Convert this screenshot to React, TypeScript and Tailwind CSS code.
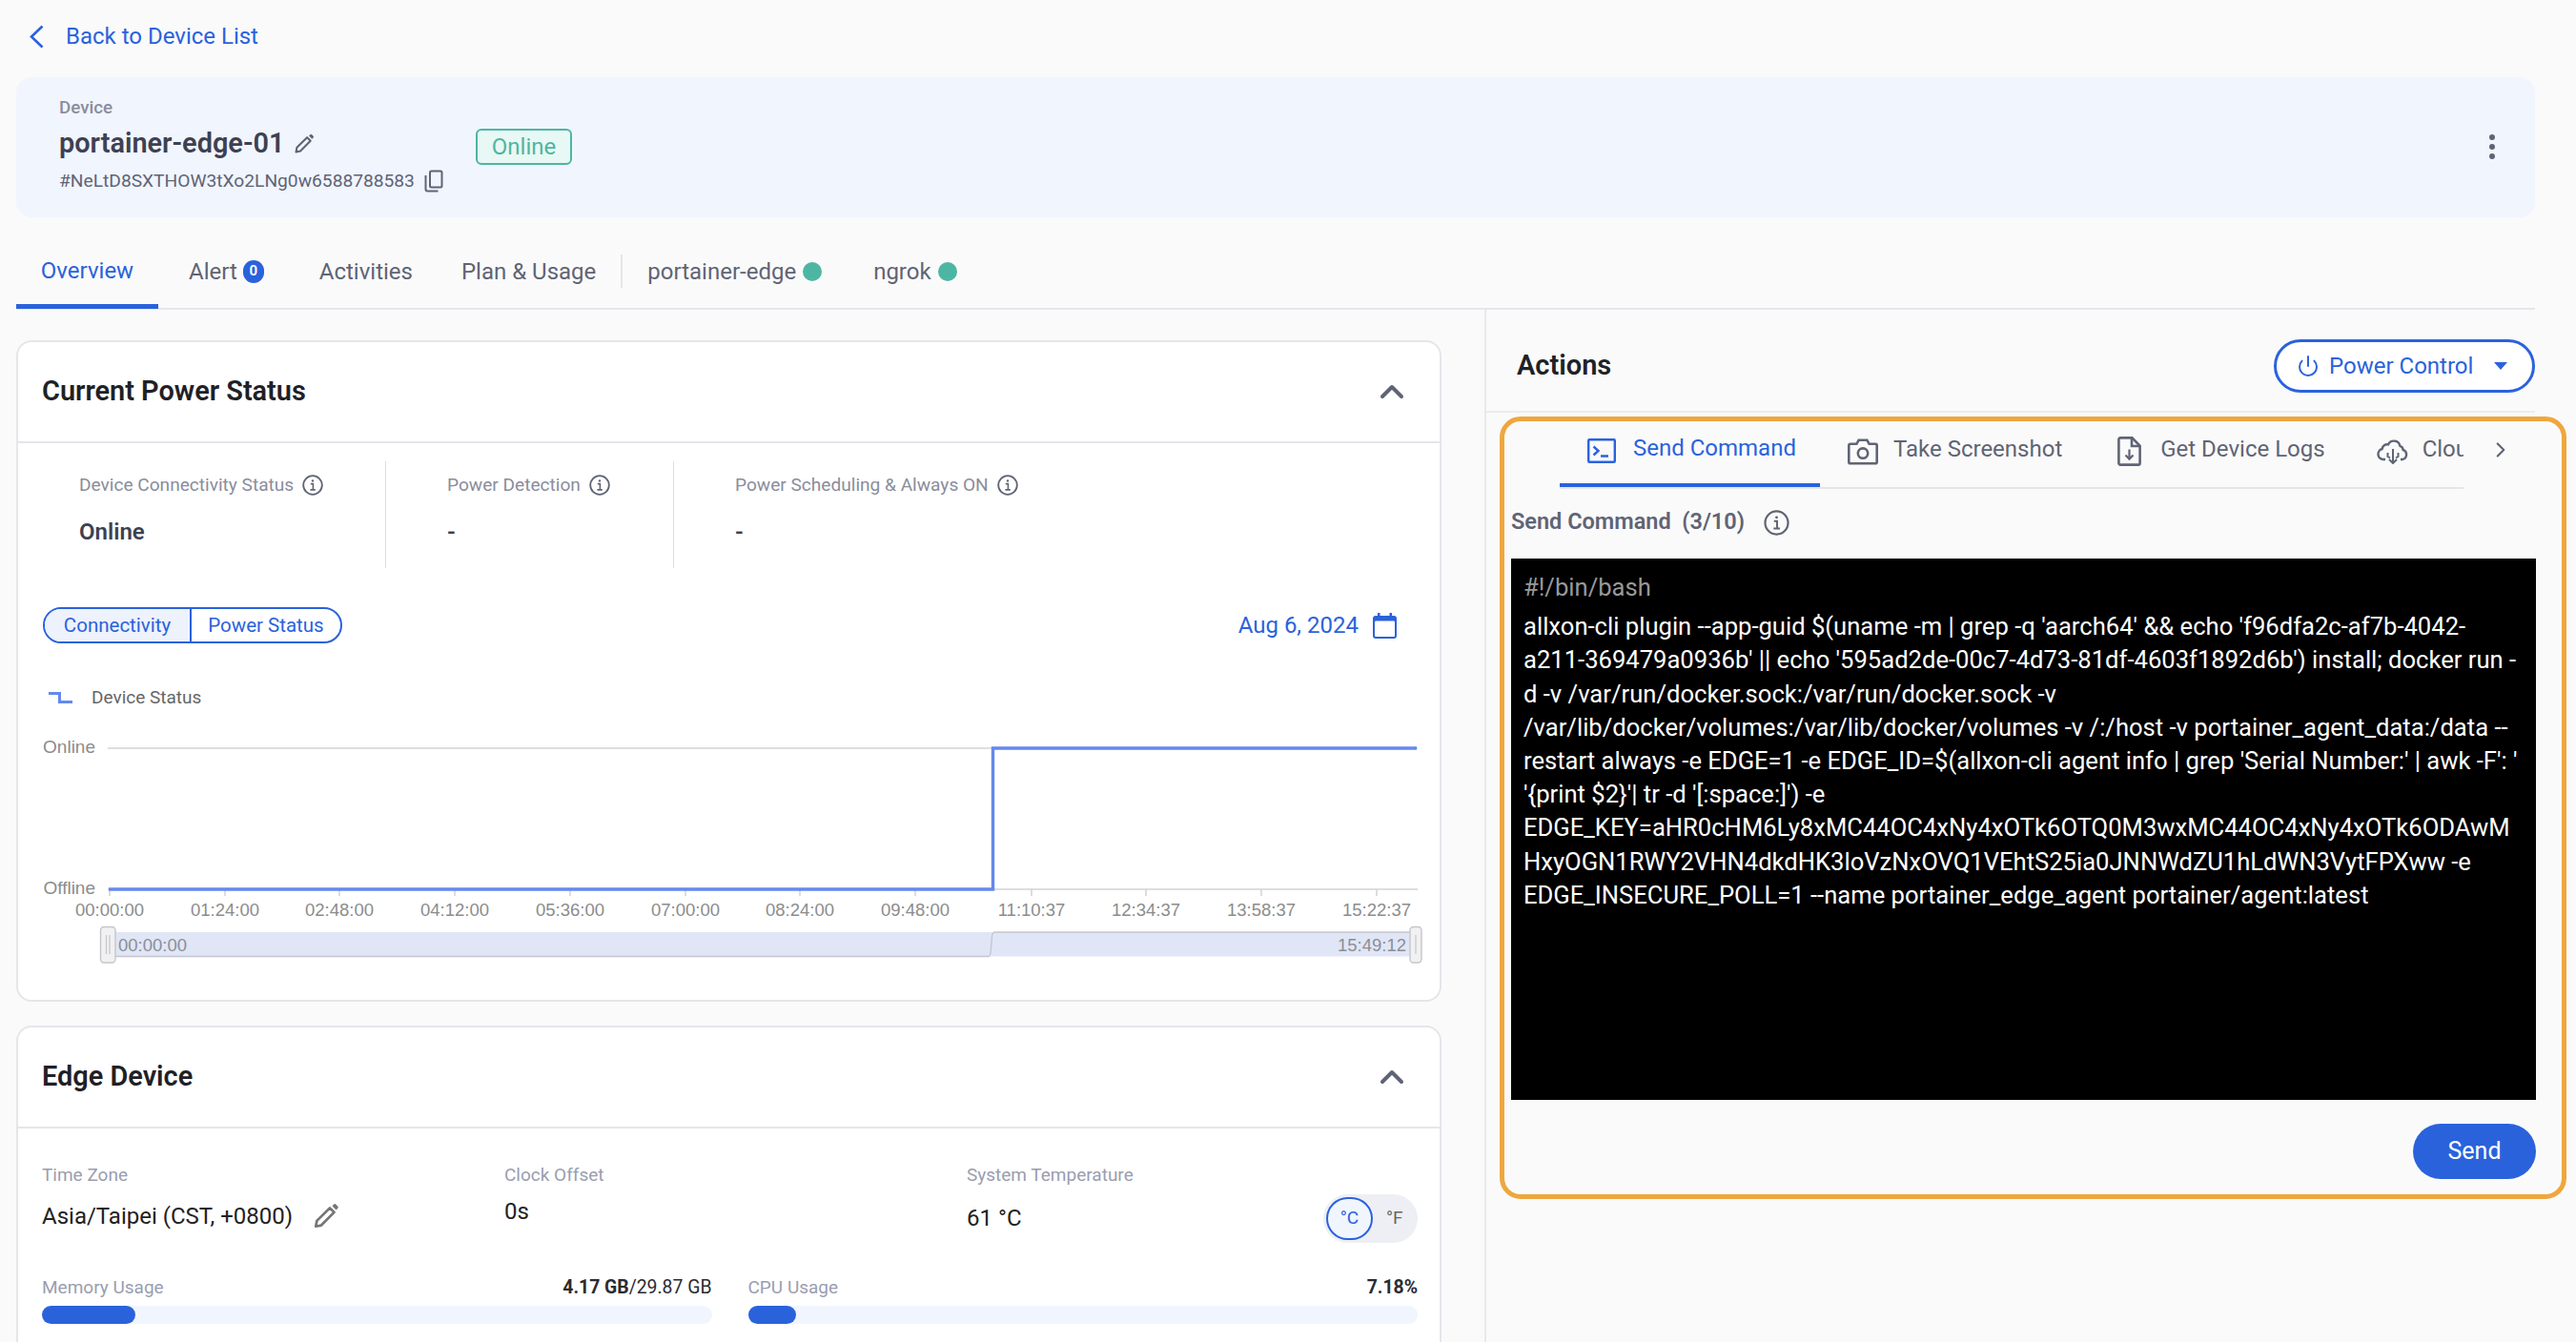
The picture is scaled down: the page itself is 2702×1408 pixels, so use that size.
import { ChevronRight, ChevronUp, Power } from "lucide-react";

const CHART_TICKS = [
  [114, "00:00:00"],
  [235, "01:24:00"],
  [355, "02:48:00"],
  [476, "04:12:00"],
  [597, "05:36:00"],
  [718, "07:00:00"],
  [838, "08:24:00"],
  [959, "09:48:00"],
  [1081, "11:10:37"],
  [1201, "12:34:37"],
  [1322, "13:58:37"],
  [1443, "15:22:37"],
] as const;

const COMMAND_LINES = [
  "allxon-cli plugin --app-guid $(uname -m | grep -q 'aarch64' && echo 'f96dfa2c-af7b-4042-",
  "a211-369479a0936b' || echo '595ad2de-00c7-4d73-81df-4603f1892d6b') install; docker run -",
  "d -v /var/run/docker.sock:/var/run/docker.sock -v",
  "/var/lib/docker/volumes:/var/lib/docker/volumes -v /:/host -v portainer_agent_data:/data --",
  "restart always -e EDGE=1 -e EDGE_ID=$(allxon-cli agent info | grep 'Serial Number:' | awk -F': '",
  "'{print $2}'| tr -d '[:space:]') -e",
  "EDGE_KEY=aHR0cHM6Ly8xMC44OC4xNy4xOTk6OTQ0M3wxMC44OC4xNy4xOTk6ODAwM",
  "HxyOGN1RWY2VHN4dkdHK3loVzNxOVQ1VEhtS25ia0JNNWdZU1hLdWN3VytFPXww -e",
  "EDGE_INSECURE_POLL=1 --name portainer_edge_agent portainer/agent:latest",
];

function InfoIcon({ size = 22 }: { size?: number }) {
  return (
    <svg width={size} height={size} viewBox="0 0 22 22" fill="none" stroke="#5f6475" className="shrink-0">
      <circle cx="11" cy="11" r="9.8" strokeWidth="1.8" />
      <path d="M8.8 9.6h2.6v6.2M8.4 15.9h5.4" strokeWidth="1.6" />
      <circle cx="11" cy="6.4" r="1.2" fill="#5f6475" stroke="none" />
    </svg>
  );
}

function PencilIcon({ size, color }: { size: number; color: string }) {
  return (
    <svg width={size} height={size} viewBox="0 0 24 24" fill="none" stroke={color} strokeWidth="2.3" className="shrink-0">
      <path d="M2.8 21.2l.9-5L15.4 4.6l3.9 3.9L7.7 20.2z" strokeLinejoin="round" />
      <path d="M17.5 2.7l1.4-1.3a1.4 1.4 0 0 1 2 0l1.6 1.6a1.4 1.4 0 0 1 0 2l-1.4 1.4z" fill={color} stroke="none" />
    </svg>
  );
}

function CopyIcon() {
  return (
    <svg width="20" height="24" viewBox="0 0 20 24" fill="none" stroke="#5f6475" strokeWidth="2" className="shrink-0">
      <rect x="6" y="1.5" width="12.5" height="17" rx="1.5" />
      <path d="M1.5 6v14.5a2 2 0 0 0 2 2h11" />
    </svg>
  );
}

function BackIcon() {
  return (
    <svg width="15" height="25" viewBox="0 0 15 25" fill="none" stroke="#2a62dc" strokeWidth="2.6" className="shrink-0">
      <path d="M13.5 1.5L2 12.5l11.5 11" />
    </svg>
  );
}

function CalendarIcon() {
  return (
    <svg width="25" height="27" viewBox="0 0 25 27" className="shrink-0">
      <path d="M5 0h2.5v3h10V0H20v3h2a3 3 0 0 1 3 3v18a3 3 0 0 1-3 3H3a3 3 0 0 1-3-3V6a3 3 0 0 1 3-3h2z" fill="#2a62dc" />
      <rect x="2" y="8.5" width="21" height="16.5" rx="1" fill="#ffffff" />
    </svg>
  );
}

function LegendIcon() {
  return (
    <svg width="25" height="12" viewBox="0 0 25 12" fill="none" stroke="#6489ee" strokeWidth="3" className="shrink-0">
      <path d="M0 1.5h11.5v9H25" />
    </svg>
  );
}

function TerminalIcon() {
  return (
    <svg width="30" height="26" viewBox="0 0 30 26" fill="none" stroke="#2a62dc" strokeWidth="2.4" className="mt-[6px] shrink-0">
      <rect x="1.2" y="1.2" width="27.6" height="23.6" rx="1" />
      <path d="M6.5 8.5l5 4.5-5 4.5M14 18.5h8" />
    </svg>
  );
}

function CameraIcon() {
  return (
    <svg width="32" height="28" viewBox="0 0 32 28" fill="none" stroke="#5f6475" strokeWidth="2.6" className="mt-[6px] shrink-0">
      <path d="M2.8 5.8h6.6l2.2-4h8.8l2.2 4h6.6a1.5 1.5 0 0 1 1.5 1.5v17.4a1.5 1.5 0 0 1-1.5 1.5H2.8a1.5 1.5 0 0 1-1.5-1.5V7.3a1.5 1.5 0 0 1 1.5-1.5z" />
      <circle cx="16" cy="15.6" r="5.2" />
    </svg>
  );
}

function FileDownIcon() {
  return (
    <svg width="25" height="31" viewBox="0 0 25 31" fill="none" stroke="#5f6475" strokeWidth="2.6" className="mt-[6px] shrink-0">
      <path d="M3 1.4h12.4l8.2 8.4v18.2a1.6 1.6 0 0 1-1.6 1.6H3a1.6 1.6 0 0 1-1.6-1.6V3A1.6 1.6 0 0 1 3 1.4z" />
      <path d="M15 1.4v8.6h8.6" />
      <path d="M12.5 13.5v10M8.5 19.5l4 4.2 4-4.2" strokeWidth="2.2" />
    </svg>
  );
}

function CloudIcon() {
  return (
    <svg width="34" height="27" viewBox="0 0 34 27" fill="none" stroke="#5f6475" strokeWidth="2.4" className="mt-[6px] shrink-0">
      <path d="M9 22H7a5.6 5.6 0 0 1-1.4-11A5.4 5.4 0 0 1 12 6.4a6.6 6.6 0 0 1 12.4 1.4A4.6 4.6 0 0 1 27.6 12 5.2 5.2 0 0 1 27 22h-2" />
      <path d="M17 11v15M13 22l4 4 4-4M11.5 15v4l2.5 1.5M22.5 15v4L20 20.5" strokeWidth="2" />
    </svg>
  );
}

function CardHeader({ title }: { title: string }) {
  return (
    <div className="flex h-[106px] shrink-0 items-center justify-between border-b-2 border-[#e5e6ea] pl-[25px] pr-[30px]">
      <h2 className="text-[28.9px] font-semibold text-[#1f2126]">{title}</h2>
      <ChevronUp size={40} strokeWidth={2.4} className="text-[#5f6475]" />
    </div>
  );
}

function StatColumn({ label, value, width }: { label: string; value: string; width: string }) {
  return (
    <div className={`${width} pt-[14px] pl-[64px]`}>
      <div className="flex h-[22px] items-center gap-[9px]">
        <span className="text-[19.1px] text-[#8a8d9c]">{label}</span>
        <InfoIcon />
      </div>
      <div className="mt-[24px] h-[28px] text-[24px] leading-[28px] font-semibold text-[#3d4152]">{value}</div>
    </div>
  );
}

function Chart() {
  return (
    <svg width="1493" height="260" viewBox="18 760 1493 260" className="mt-[16px] block">
      <g fontFamily="'Liberation Sans', sans-serif" fontSize="19" fill="#8c8c8c">
        <text x="99" y="790" textAnchor="end">Online</text>
        <text x="99" y="938" textAnchor="end">Offline</text>
        {CHART_TICKS.map(([x, t]) => (
          <text key={t} x={x} y="961" textAnchor="middle" fontSize="18.5">{t}</text>
        ))}
      </g>
      <path d="M112 785H1486M112 933H1486" stroke="#d4d4d4" strokeWidth="1.6" fill="none" />
      {CHART_TICKS.map(([x, t]) => (
        <path key={t} d={`M${x} 933v7`} stroke="#cfcfcf" strokeWidth="1.4" />
      ))}
      <path d="M113 933H1040.5V785H1485" stroke="#6489ee" strokeWidth="3.4" fill="none" />
      {/* slider */}
      <rect x="120" y="978" width="1360" height="25.5" fill="#e0e6f5" />
      <path d="M120 1003.5H1036Q1038 1003 1038.5 995L1039.5 982Q1040 978 1043 978H1479" stroke="#c3c7d1" strokeWidth="1.4" fill="none" />
      <rect x="104.5" y="972.5" width="15.5" height="37.5" rx="3.5" fill="#f1f1f3" stroke="#c6c6ca" strokeWidth="1.4" />
      <path d="M110.5 981v20M114 981v20" stroke="#c6c6ca" strokeWidth="1.2" />
      <rect x="1478" y="972.5" width="12" height="37.5" rx="3.5" fill="#f1f1f3" stroke="#c6c6ca" strokeWidth="1.4" />
      <path d="M1484 981v20" stroke="#c6c6ca" strokeWidth="1.2" />
      <g fontFamily="'Liberation Sans', sans-serif" fontSize="18.5" fill="#8b8e98">
        <text x="123" y="998">00:00:00</text>
        <text x="1474" y="998" textAnchor="end">15:49:12</text>
      </g>
    </svg>
  );
}

function Usage({ label, value, fill }: { label: string; value: React.ReactNode; fill: string }) {
  return (
    <div>
      <div className="flex h-[22px] items-center justify-between">
        <span className="text-[19px] text-[#9a9db0]">{label}</span>
        <span className="text-[19.4px] text-[#2a2c33]">{value}</span>
      </div>
      <div className="mt-[8px] h-[19px] rounded-full bg-[#f1f5fe]">
        <div className={`h-full rounded-full bg-[#2a62dc] ${fill}`} />
      </div>
    </div>
  );
}

function PageTab({ label, active, className = "", children }: { label: string; active?: boolean; className?: string; children?: React.ReactNode }) {
  return (
    <div className={`flex h-full items-center gap-[6px] text-[24px] ${active ? "text-[#2a62dc]" : "pt-[18px] text-[#5f6475]"} ${className}`}>
      {label}
      {children}
    </div>
  );
}

export default function App() {
  return (
    <div className="flex h-[1408px] w-[2702px] flex-col overflow-hidden bg-[#fafafa] font-['Roboto',sans-serif]">
      {/* back link */}
      <div className="mb-[5px] flex h-[76px] items-center pl-[31px] text-[24px] text-[#2a62dc]">
        <BackIcon />
        <span className="ml-[23px]">Back to Device List</span>
      </div>

      {/* device header */}
      <div className="ml-[17px] mr-[43px] flex h-[147px] shrink-0 rounded-2xl bg-[#f1f5fe] pl-[45px] pr-[42px]">
        <div className="w-[437px] pt-[21px]">
          <div className="h-[22px] text-[18.8px] leading-[22px] font-medium text-[#8a8d9c]">Device</div>
          <div className="mt-[9px] flex h-[36px] items-center gap-[9px]">
            <span className="text-[28.9px] font-semibold text-[#3d4152]">portainer-edge-01</span>
            <PencilIcon size={22} color="#5f6475" />
          </div>
          <div className="mt-[9px] flex h-[24px] items-center gap-[10px]">
            <span className="text-[19.2px] text-[#5f6475]">#NeLtD8SXTHOW3tXo2LNg0w6588788583</span>
            <CopyIcon />
          </div>
        </div>
        <div className="mt-[54px] flex h-[38px] w-[101px] items-center justify-center rounded-md border-2 border-[#4db6a2] bg-[#e8f8f5] text-[24px] text-[#4db6a2]">Online</div>
        <div className="ml-auto flex flex-col gap-[4px] pt-[60px]">
          <span className="size-[6px] rounded-full bg-[#5f6475]" />
          <span className="size-[6px] rounded-full bg-[#5f6475]" />
          <span className="size-[6px] rounded-full bg-[#5f6475]" />
        </div>
      </div>

      {/* page tabs */}
      <div className="ml-[17px] mr-[43px] flex h-[97px] shrink-0 items-center border-b-2 border-[#e5e6ee]">
        <PageTab label="Overview" active className="-mb-[2px] w-[149px] justify-center border-b-[5px] border-[#2a62dc] pt-[20px]" />
        <PageTab label="Alert" className="ml-[32px]">
          <span className="flex h-[24px] w-[22px] items-center justify-center rounded-full bg-[#2a62dc] text-[15px] font-semibold text-white">0</span>
        </PageTab>
        <PageTab label="Activities" className="ml-[58px]" />
        <PageTab label="Plan & Usage" className="ml-[51px]" />
        <div className="ml-[26px] mt-[18px] h-[35px] w-[2px] bg-[#e5e6ea]" />
        <PageTab label="portainer-edge" className="ml-[26px] gap-[7px]">
          <span className="size-[20px] rounded-full bg-[#4db6a2]" />
        </PageTab>
        <PageTab label="ngrok" className="ml-[54px] gap-[7px]">
          <span className="size-[20px] rounded-full bg-[#4db6a2]" />
        </PageTab>
      </div>

      <div className="flex min-h-0 flex-1">
        {/* left column */}
        <div className="w-[1559px] shrink-0 border-r-2 border-[#e9e9ed] pl-[17px] pr-[45px] pt-[32px]">
          <div className="h-[694px] overflow-hidden rounded-2xl border-2 border-[#e5e6ea] bg-white">
            <CardHeader title="Current Power Status" />
            <div className="mt-[19px] flex h-[112px]">
              <StatColumn label="Device Connectivity Status" value="Online" width="w-[386px] border-r border-[#dcdde2]" />
              <StatColumn label="Power Detection" value="-" width="w-[302px] border-r border-[#dcdde2]" />
              <StatColumn label="Power Scheduling & Always ON" value="-" width="flex-1" />
            </div>
            <div className="mt-[41px] flex h-[38px] items-center justify-between pl-[26px] pr-[45px] text-[20.5px] text-[#2a62dc]">
              <div className="flex h-full overflow-hidden rounded-full border-2 border-[#2a62dc]">
                <div className="flex w-[154px] items-center justify-center border-r-2 border-[#2a62dc] bg-[#edf2fd]">Connectivity</div>
                <div className="flex w-[156px] items-center justify-center">Power Status</div>
              </div>
              <div className="flex items-center gap-[15px] text-[24px]">
                Aug 6, 2024
                <CalendarIcon />
              </div>
            </div>
            <div className="mt-[45px] flex h-[24px] items-center gap-[20px] pl-[32px]">
              <LegendIcon />
              <span className="text-[19px] text-[#666666]">Device Status</span>
            </div>
            <Chart />
          </div>

          <div className="mt-[25px] h-[400px] overflow-hidden rounded-t-2xl border-2 border-[#e5e6ea] bg-white">
            <CardHeader title="Edge Device" />
            <div className="ml-[25px] mt-[38px] grid h-[118px] w-[1443px] grid-cols-[485px_485px_473px]">
              <div>
                <div className="h-[22px] text-[19px] leading-[22px] text-[#9a9db0]">Time Zone</div>
                <div className="mt-[18px] flex h-[28px] items-center gap-[21px] text-[24px] text-[#222222]">
                  Asia/Taipei (CST, +0800)
                  <PencilIcon size={28} color="#757575" />
                </div>
              </div>
              <div>
                <div className="h-[22px] text-[19px] leading-[22px] text-[#9a9db0]">Clock Offset</div>
                <div className="mt-[13px] h-[28px] text-[24px] leading-[28px] text-[#222222]">0s</div>
              </div>
              <div className="flex justify-between">
                <div>
                  <div className="h-[22px] text-[19px] leading-[22px] text-[#9a9db0]">System Temperature</div>
                  <div className="mt-[20px] h-[28px] text-[24px] leading-[28px] text-[#222222]">61 °C</div>
                </div>
                <div className="mt-[31px] flex h-[51px] w-[99px] items-center rounded-full bg-[#eeeff4] pl-[3px] text-[19px]">
                  <span className="flex h-[45px] w-[49px] items-center justify-center rounded-full border-2 border-[#2a62dc] bg-[#f1f5fe] text-[#2a62dc]">°C</span>
                  <span className="ml-[14px] text-[#666666]">°F</span>
                </div>
              </div>
            </div>
            <div className="ml-[25px] grid w-[1443px] grid-cols-2 gap-[38px]">
              <Usage label="Memory Usage" fill="w-[14%]" value={<><b className="font-bold">4.17 GB</b>/29.87 GB</>} />
              <Usage label="CPU Usage" fill="w-[7.18%]" value={<b className="font-bold">7.18%</b>} />
            </div>
          </div>
        </div>

        {/* right column */}
        <div className="min-w-0 flex-1">
          <div className="mr-[43px] flex h-[108px] items-center justify-between border-b-2 border-[#ececef] pl-[32px] pt-[12px]">
            <h2 className="text-[29px] font-semibold text-[#1f2126]">Actions</h2>
            <div className="flex h-[56px] w-[274px] items-center rounded-full border-[3px] border-[#2a62dc] bg-white pl-[21px] text-[24px] text-[#2a62dc]">
              <Power size={24} strokeWidth={2} className="shrink-0" />
              <span className="ml-[10px]">Power Control</span>
              <span className="ml-[22px] h-0 w-0 border-x-[7px] border-t-[8px] border-x-transparent border-t-[#2a62dc]" />
            </div>
          </div>

          <div className="ml-[14px] mt-[4px] flex h-[821px] w-[1119px] flex-col rounded-[22px] border-[5px] border-[#eea73f]">
            <div className="flex shrink-0 items-center">
              <div className="ml-[58px] flex h-[71px] w-[948px] shrink-0 overflow-hidden border-b-2 border-[#e5e6ea] text-[24px] text-[#5f6475]">
                <div className="flex h-[69px] w-[273px] shrink-0 items-center gap-[18px] border-b-[4px] border-[#2a62dc] pb-[10px] pl-[29px] text-[#2a62dc]">
                  <TerminalIcon />
                  Send Command
                </div>
                <div className="flex shrink-0 items-center gap-[16px] pb-[12px] pl-[29px] pr-[29px]">
                  <CameraIcon />
                  Take Screenshot
                </div>
                <div className="flex shrink-0 items-center gap-[20px] pb-[12px] pl-[29px] pr-[25px]">
                  <FileDownIcon />
                  Get Device Logs
                </div>
                <div className="flex shrink-0 items-center gap-[14px] pb-[12px] pl-[29px]">
                  <CloudIcon />
                  Cloud Command
                </div>
              </div>
              <ChevronRight size={26} strokeWidth={2} className="ml-[26px] mb-[12px] text-[#5f6475]" />
            </div>

            <div className="ml-[7px] mt-[21px] flex h-[28px] items-center gap-[20px] text-[23.5px] font-semibold text-[#5f6475]">
              <span className="whitespace-pre">Send Command  (3/10)</span>
              <InfoIcon size={27} />
            </div>

            <div className="ml-[7px] mt-[24px] h-[568px] w-[1075px] shrink-0 bg-black pl-[13px] pt-[13px] text-[25.6px] leading-[35.2px] whitespace-nowrap text-white">
              <div className="mb-[6px] text-[#999999]">#!/bin/bash</div>
              {COMMAND_LINES.map((line) => (
                <div key={line}>{line}</div>
              ))}
            </div>

            <div className="mr-[27px] mt-[25px] flex h-[58px] w-[129px] items-center justify-center self-end rounded-full bg-[#2a62dc] text-[25px] text-white">Send</div>
          </div>
        </div>
      </div>
    </div>
  );
}
